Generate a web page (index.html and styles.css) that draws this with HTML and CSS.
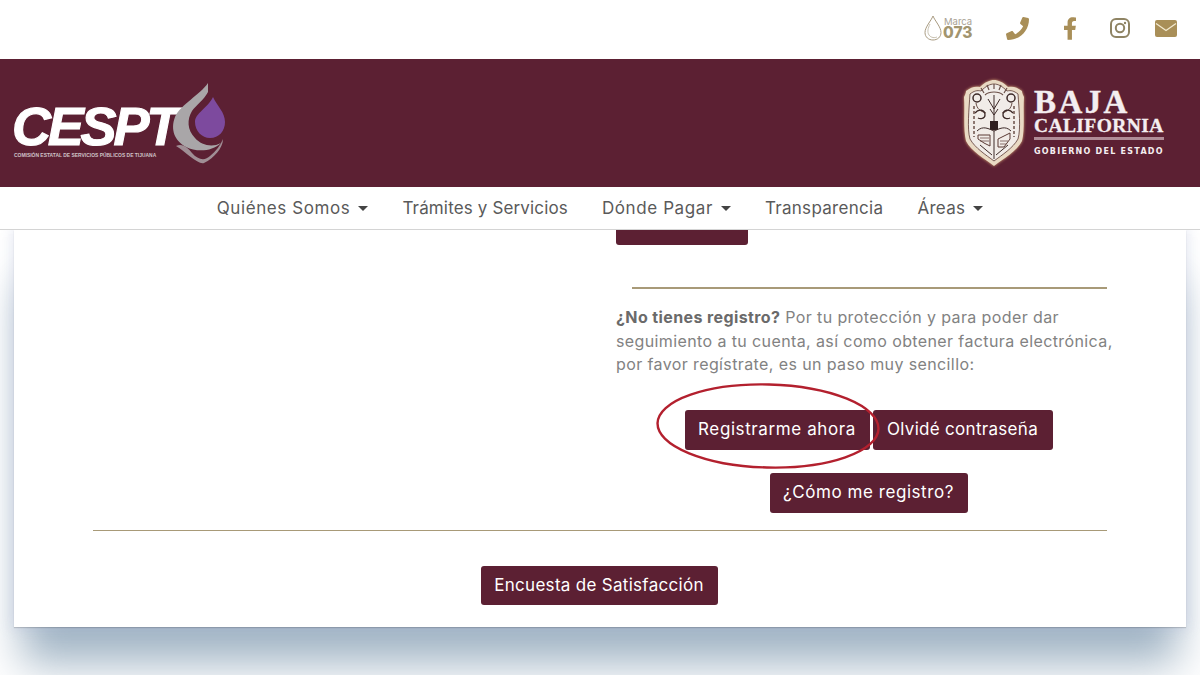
FILE: index.html
```html
<!DOCTYPE html>
<html lang="es">
  <head>
    <meta charset="utf-8" />
    <title>CESPT</title>
    <link rel="stylesheet" href="styles.css">
  </head>

  <body>
    <div class="topbar">
      <div class="marca">
        <svg class="marca-drop" viewBox="0 0 18 26"><path d="M9 1C7 6 1 12 1 17.500C1 22 4.500 25 9 25C13.500 25 17 22 17 17.500C17 12 11 6 9 1Z" fill="#fff" stroke="#a89a80" stroke-width="1"/><path d="M6 9C4 13 3 17 5 20C7 23 11 23 13 22" fill="none" stroke="#c9c2b2" stroke-width="1"/></svg>
        <div class="marca-text"><span class="marca-small">Marca</span><span class="marca-num">073</span></div>
      </div>
      <svg class="ico ico-phone" viewBox="0 0 512 512"><path d="M493.4 24.6l-104-24c-11.3-2.6-22.9 3.3-27.500 13.900l-48 112c-4.200 9.800-1.400 21.300 6.900 28l60.600 49.600c-36 76.700-98.900 140.500-177.200 177.200l-49.600-60.600c-6.800-8.300-18.200-11.100-28-6.900l-112 48C3.900 366.500-2 378.100.6 389.400l24 104C27.100 504.200 36.700 512 48 512c256.100 0 464-207.500 464-464 0-11.200-7.700-20.900-18.600-23.400z"/></svg>
      <svg class="ico ico-fb" viewBox="0 0 320 512"><path d="M279.140 288l14.220-92.660h-88.910v-60.130c0-25.350 12.420-50.060 52.240-50.060h40.420V6.260S260.430 0 225.360 0c-73.220 0-121.080 44.380-121.080 124.720v70.620H22.890V288h81.390v224h100.170V288z"/></svg>
      <svg class="ico ico-ig" viewBox="0 0 20 20"><rect x="1" y="1" width="18" height="18" rx="5" fill="none" stroke="#8f8464" stroke-width="2"/><circle cx="10" cy="10" r="4.200" fill="none" stroke="#8f8464" stroke-width="2"/><circle cx="15" cy="5" r="1.200" fill="#8f8464"/></svg>
      <svg class="ico ico-mail" viewBox="0 0 22 17"><rect width="22" height="17" rx="2" fill="#a98f58"/><path d="M1 3.500L11 10.500L21 3.500" fill="none" stroke="#f3ead0" stroke-width="1.300"/></svg>
    </div>

    <header class="banner">
      <div class="cespt">
        <div class="cespt-text">
          <div class="cespt-name">CESPT</div>
          <div class="cespt-sub">COMISIÓN ESTATAL DE SERVICIOS PÚBLICOS DE TIJUANA</div>
        </div>
        <svg class="cespt-drop" viewBox="170 80 58 88">
          <path d="M208 83C200 95 181 104 175 117C170 130 175 141 186 147C196 152 212 152 221 143C212 148 201 145 195 138C187 130 187 119 192 111C196 105 204 100 208 92Z" fill="#a9a6a8"/>
          <path d="M213 97C208 108 195 113 195 122C195 131 202 138 210 138C219 138 225 131 225 122C225 112 217 106 213 97Z" fill="#7d4a9e"/>
          <path d="M176 146C183 143 188 148 192 153C198 160 205 161 210 156C216 151 220 146 223 139C223 148 214 158 204 163C198 165 186 152 176 146Z" fill="#a08e95"/>
        </svg>
      </div>

      <div class="baja">
        <svg class="shield" viewBox="0 0 62 88">
          <path d="M3 12C8 8 12 7 17 8C22 3 27 1 31 1C35 1 40 3 45 8C50 7 54 8 59 12C59 14 60 16 61 18C60 32 62 50 59 62C54 72 40 80 31 87C22 80 8 72 3 62C0 50 2 32 1 18C2 16 3 14 3 12Z" fill="#e9dac4"/>
          <path d="M7 15C11 12 14 11 18 12C23 7 27 5 31 5C35 5 39 7 44 12C48 11 51 12 55 15C56 30 58 50 55 60C50 69 39 76 31 82C23 76 12 69 7 60C4 50 6 30 7 15Z" fill="#f1ece8" stroke="#5a3a34" stroke-width="0.800"/>
          <path d="M21 14L18 9M26 11L24 6M31 10V5M36 11L38 6M41 14L44 9M22 16C26 12 36 12 40 16" fill="none" stroke="#6b5048" stroke-width="1.200"/>
          <path d="M31 16V46M25 20L31 30L37 20M27 30L31 36L35 30" fill="none" stroke="#3d2a28" stroke-width="1"/>
          <circle cx="14" cy="19" r="4" fill="none" stroke="#3d2a28" stroke-width="1.500"/>
          <circle cx="48" cy="19" r="4" fill="none" stroke="#3d2a28" stroke-width="1.500"/>
          <path d="M13 24C14 30 17 32 23 34M49 24C48 30 45 32 39 34" fill="none" stroke="#6b5048" stroke-width="1"/>
          <path d="M12 34C16 29 22 31 22 36C22 40 17 40 15 39M50 34C46 29 40 31 40 36C40 40 45 40 47 39" fill="none" stroke="#3d2a28" stroke-width="1.300"/>
          <rect x="27" y="42" width="8" height="9" fill="#2f1f20"/>
          <path d="M11 27V58M51 27V58" fill="none" stroke="#6b5048" stroke-width="1.500" stroke-dasharray="3 2"/>
          <path d="M31 52V80M17 66L29 76M45 66L33 76M14 52C20 46 26 50 31 52C36 50 42 46 48 52" fill="none" stroke="#3d2a28" stroke-width="1"/>
          <path d="M15 56H27V67L21 64L15 60ZM35 60L47 54V60L41 68L35 68Z" fill="none" stroke="#5a3a34" stroke-width="1"/>
          <path d="M17 59H26M17 62H26M37 62H45M37 65H43" fill="none" stroke="#5a3a34" stroke-width="0.700"/>
        </svg>
        <div class="baja-text">
          <div class="baja-name">BAJA</div>
          <div class="baja-state">CALIFORNIA</div>
          <div class="baja-rule"></div>
          <div class="baja-gob">GOBIERNO DEL ESTADO</div>
        </div>
      </div>
    </header>

    <nav class="menu">
      <a class="menu-link menu-wide caret" href="#">Quiénes Somos</a>
      <a class="menu-link menu-tight" href="#">Trámites y Servicios</a>
      <a class="menu-link menu-wide caret" href="#">Dónde Pagar</a>
      <a class="menu-link" href="#">Transparencia</a>
      <a class="menu-link caret" href="#">Áreas</a>
    </nav>

    <main class="card">
      <section class="col-right">
        <div class="btn-cut"></div>
        <hr class="rule-gold" />
        <p class="intro">
          <b>¿No tienes registro?</b> Por tu protección y para poder dar<br />
          seguimiento a tu cuenta, así como obtener factura electrónica,<br />
          por favor regístrate, es un paso muy sencillo:
        </p>
        <div class="btn-row">
          <a class="btn btn-reg" href="#">Registrarme ahora</a>
          <a class="btn btn-olv" href="#">Olvidé contraseña</a>
          <svg class="circled" viewBox="0 0 226 90">
            <ellipse cx="113" cy="45" rx="110.500" ry="41.500" transform="rotate(1.500 113 45)" fill="none" stroke="#b3202e" stroke-width="2.400"/>
          </svg>
        </div>
        <div class="btn-row-2">
          <a class="btn btn-como" href="#">¿Cómo me registro?</a>
        </div>
      </section>
      <hr class="rule-full" />
      <div class="survey">
        <a class="btn btn-enc" href="#">Encuesta de Satisfacción</a>
      </div>
    </main>
  </body>
</html>
```
FILE: styles.css
```css
html, body {
  margin: 0;
  padding: 0;
}

body {
  width: 1200px;
  height: 675px;
  overflow: hidden;
  background-color: white;
  font-family: "Inter", "Noto Sans", sans-serif;
}

.topbar {
  height: 59px;
  background-color: white;
  display: flex;
  align-items: center;
  justify-content: flex-end;
  padding: 0 23px 3px 0;
  box-sizing: border-box;
  position: relative;
  z-index: 3;
}

.ico {
  fill: #a98f58;
  display: block;
}

.ico-phone {
  width: 23px;
  height: 23px;
  margin-left: 35px;
}

.ico-fb {
  width: 14px;
  height: 23px;
  margin-left: 34px;
}

.ico-ig {
  width: 20px;
  height: 20px;
  margin-left: 33px;
}

.ico-mail {
  width: 22px;
  height: 17px;
  margin-left: 25px;
}

.marca {
  display: flex;
  align-items: center;
  gap: 1px;
}

.marca-drop {
  width: 18px;
  height: 26px;
}

.marca-text {
  display: flex;
  flex-direction: column;
  width: 28px;
}

.marca-small {
  font-size: 9.500px;
  color: #a9a295;
  line-height: 9px;
  padding-left: 1px;
}

.marca-num {
  font-size: 15.500px;
  font-weight: 800;
  color: #a2956f;
  line-height: 13px;
}

.banner {
  height: 128px;
  background-color: #5c2033;
  display: flex;
  justify-content: space-between;
  align-items: center;
  padding: 0 36px 0 14px;
  position: relative;
  z-index: 3;
}

.cespt {
  display: flex;
  align-items: flex-start;
  height: 88px;
  margin-top: 2px;
}

.cespt-text {
  padding-top: 21px;
  width: 156px;
}

.cespt-name {
  font-family: "Liberation Sans", sans-serif;
  font-weight: 700;
  font-style: italic;
  font-size: 54px;
  line-height: 50px;
  letter-spacing: -3.200px;
  margin-left: -2px;
  -webkit-text-stroke: 1.100px white;
  color: white;
}

.cespt-sub {
  font-family: "Liberation Sans", sans-serif;
  font-size: 4.950px;
  font-weight: 700;
  white-space: nowrap;
  color: #cfc3c8;
  line-height: 9px;
}

.cespt-drop {
  width: 58px;
  height: 88px;
  flex: none;
}

.baja {
  display: flex;
  align-items: center;
  gap: 9px;
}

.shield {
  width: 62px;
  height: 88px;
  filter: drop-shadow(0 0 1.500px #d9a877);
}

.baja-text {
  font-family: "Liberation Serif", serif;
  color: #f4eef0;
  font-weight: 700;
  width: 130px;
  margin-top: -2px;
}

.baja-name {
  font-size: 33px;
  line-height: 28px;
  letter-spacing: 2.400px;
  -webkit-text-stroke: 0.400px #f4eef0;
}

.baja-state {
  font-size: 19.500px;
  line-height: 20px;
  letter-spacing: 0.400px;
  white-space: nowrap;
  -webkit-text-stroke: 0.300px #f4eef0;
}

.baja-rule {
  height: 3px;
  background-color: #b08c97;
  margin: 1px 0 7px;
}

.baja-gob {
  font-family: "DejaVu Sans", sans-serif;
  font-size: 8px;
  font-weight: 700;
  line-height: 10px;
  letter-spacing: 1.250px;
  white-space: nowrap;
}

.menu {
  height: 43px;
  box-sizing: border-box;
  background-color: white;
  border-bottom: 1px solid #d4d4d4;
  display: flex;
  justify-content: center;
  align-items: center;
  gap: 34px;
  position: relative;
  z-index: 3;
}

.menu-link {
  color: #5a5a5a;
  font-size: 17px;
  letter-spacing: 0.300px;
  text-decoration: none;
  white-space: nowrap;
}

.menu-wide {
  letter-spacing: 0.600px;
}

.menu-tight {
  letter-spacing: 0.150px;
}

.caret::after {
  content: "";
  display: inline-block;
  margin-left: 8px;
  vertical-align: 3px;
  border-top: 5px solid #444;
  border-left: 5.500px solid transparent;
  border-right: 5.500px solid transparent;
}

.card {
  width: 1172px;
  height: 397px;
  margin-left: 14px;
  background-color: white;
  box-shadow: 0 1px 1px rgba(0, 0, 0, 0.15), 0 0 12px 2px rgba(170, 180, 215, 0.3), 0 45px 40px -8px rgba(85, 120, 150, 0.55);
  box-sizing: border-box;
  padding: 0 79px;
}

.col-right {
  width: 507px;
  margin-left: 523px;
}

.btn-cut {
  width: 132px;
  height: 15px;
  background-color: #5c2033;
  border-radius: 0 0 3px 3px;
}

.rule-gold {
  margin: 42px 16px 0;
  border: 0;
  height: 2px;
  background-color: #a89a78;
}

.intro {
  margin: 17px 0 0;
  width: 510px;
  font-size: 16px;
  line-height: 23.500px;
  letter-spacing: 0.390px;
  color: #828282;
  white-space: nowrap;
}

.intro b {
  color: #6a6a6a;
  font-weight: 700;
}

.btn {
  display: block;
  box-sizing: border-box;
  height: 40px;
  line-height: 38px;
  text-align: center;
  background-color: #5c2033;
  color: white;
  border-radius: 3px;
  font-size: 17px;
  letter-spacing: 0.300px;
  text-decoration: none;
  white-space: nowrap;
}

.btn-reg {
  width: 185px;
  letter-spacing: 0.600px;
}

.btn-olv {
  width: 180px;
}

.btn-como {
  width: 198px;
  letter-spacing: 0.550px;
}

.btn-enc {
  width: 237px;
  height: 39px;
}

.btn-row {
  display: flex;
  justify-content: center;
  gap: 3px;
  margin-top: 33px;
  padding-right: 2px;
  position: relative;
}

.circled {
  position: absolute;
  left: 39px;
  top: -29px;
  width: 226px;
  height: 90px;
  overflow: visible;
}

.btn-row-2 {
  display: flex;
  justify-content: center;
  margin-top: 23px;
  padding-right: 2px;
}

.rule-full {
  margin: 17px 0 0;
  border: 0;
  height: 1px;
  background-color: #a89a78;
}

.survey {
  display: flex;
  justify-content: center;
  margin-top: 35px;
  padding-right: 2px;
}
```
